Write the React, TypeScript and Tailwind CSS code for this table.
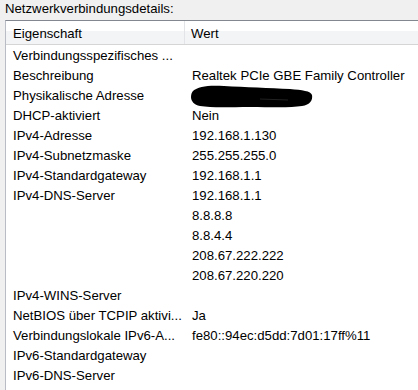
import React from "react";

const rows: [string, string][] = [
  ["Verbindungsspezifisches ...", ""],
  ["Beschreibung", "Realtek PCIe GBE Family Controller"],
  ["Physikalische Adresse", "__MASK__"],
  ["DHCP-aktiviert", "Nein"],
  ["IPv4-Adresse", "192.168.1.130"],
  ["IPv4-Subnetzmaske", "255.255.255.0"],
  ["IPv4-Standardgateway", "192.168.1.1"],
  ["IPv4-DNS-Server", "192.168.1.1"],
  ["", "8.8.8.8"],
  ["", "8.8.4.4"],
  ["", "208.67.222.222"],
  ["", "208.67.220.220"],
  ["IPv4-WINS-Server", ""],
  ["NetBIOS über TCPIP aktivi...", "Ja"],
  ["Verbindungslokale IPv6-A...", "fe80::94ec:d5dd:7d01:17ff%11"],
  ["IPv6-Standardgateway", ""],
  ["IPv6-DNS-Server", ""],
];

function Mask() {
  return (
    <svg width="124" height="26" viewBox="0 0 124 26" className="block">
      <path
        d="M3 8 C 8 3, 20 2, 34 3 C 55 4, 80 5, 100 6 C 112 7, 121 8, 122 12 C 123 17, 120 22, 112 23 C 100 25, 80 24, 60 24 C 40 24, 22 25, 10 23 C 4 22, 1 18, 1 14 C 1 11, 2 9, 3 8 Z"
        fill="#000"
      />
      <path d="M70 16 L 98 17" stroke="#222" strokeWidth="1" />
    </svg>
  );
}

export default function App() {
  return (
    <div
      className="w-[418px] h-[390px] bg-[#f0f0f0] overflow-hidden flex flex-col text-[13.2px] text-black"
      style={{ fontFamily: '"Liberation Sans", Arial, sans-serif' }}
    >
      <div className="h-[20px] pl-[5px] leading-[17px]">Netzwerkverbindungsdetails:</div>
      <div className="ml-[5px] flex-1 bg-white border-t border-l border-t-[#828790] border-l-[#b9bcc4] flex flex-col">
        <div className="h-[24px] flex border-b border-b-[#d5d5d5] bg-[linear-gradient(to_bottom,#ffffff_0%,#ffffff_42%,#f3f4f6_43%,#f3f4f6_100%)]">
          <div className="w-[179px] pl-[7px] pt-[3px] leading-[20px] border-r border-r-[#e2e4e8]">Eigenschaft</div>
          <div className="pl-[6px] pt-[3px] leading-[20px]">Wert</div>
        </div>
        <div className="pt-[1px] flex flex-col">
          {rows.map(([k, v], i) => (
            <div key={i} className="h-[20px] flex leading-[20px]">
              <div className="w-[180px] pl-[7px] whitespace-nowrap overflow-hidden">{k}</div>
              <div className="pl-[6px] whitespace-nowrap">
                {v === "__MASK__" ? (
                  <div className="-mt-[3px] -ml-[2px]">
                    <Mask />
                  </div>
                ) : (
                  v
                )}
              </div>
            </div>
          ))}
        </div>
      </div>
    </div>
  );
}
